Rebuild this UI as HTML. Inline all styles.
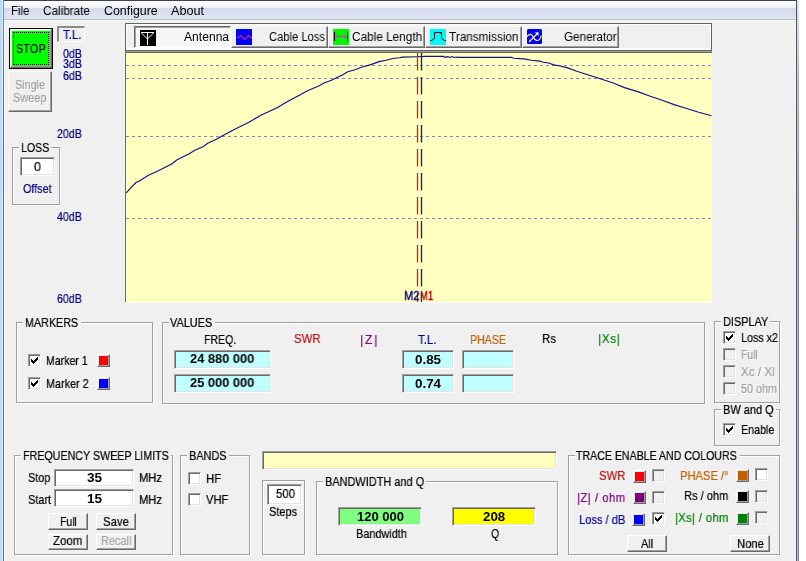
<!DOCTYPE html>
<html><head><meta charset="utf-8"><title>Antenna Analyser</title>
<style>
html,body{margin:0;padding:0}
body{width:806px;height:561px;overflow:hidden;background:#f0f0f0;position:relative;font-family:"Liberation Sans",sans-serif}
div,svg,span{position:absolute;box-sizing:border-box}
span{will-change:transform;white-space:nowrap;line-height:16px;transform-origin:0 0}
.sk{border:1px solid;border-color:#a0a0a0 #fff #fff #a0a0a0;box-shadow:inset 1px 1px 0 #696969,inset -1px -1px 0 #e3e3e3}
.rs{background:#f0f0f0;border:1px solid;border-color:#fff #696969 #696969 #fff;box-shadow:inset -1px -1px 0 #a0a0a0}
.sw{border:1px solid;border-color:#fff #696969 #696969 #fff;box-shadow:inset -1px -1px 0 #a0a0a0,inset 1px 1px 0 #e3e3e3}
.gb{border:1px solid #a0a0a0;box-shadow:1px 1px 0 #fff,inset 1px 1px 0 #fff}
</style></head>
<body>
<div style="left:0px;top:0px;width:806px;height:1px;background:#3e424a;"></div>
<div style="left:0px;top:0px;width:2px;height:561px;background:#badafb;"></div>
<div style="left:2px;top:0px;width:1px;height:561px;background:#dcefff;"></div>
<div style="left:3px;top:0px;width:1px;height:561px;background:linear-gradient(180deg,#808c9a 0,#667486 60px,#5e6c7c 200px);"></div>
<div style="left:4px;top:20px;width:1px;height:541px;background:#f5f8fa;"></div>
<div style="left:795px;top:20px;width:1px;height:541px;background:#f8fbfc;"></div>
<div style="left:796px;top:0px;width:1px;height:561px;background:#4a4f58;"></div>
<div style="left:797px;top:0px;width:1px;height:561px;background:linear-gradient(180deg,#dbe6f5 0,#c4cedc 80px,#b6becb 240px);"></div>
<div style="left:798px;top:0px;width:1px;height:561px;background:linear-gradient(180deg,#e6eef8 0,#a9b2be 80px,#7a828c 240px);"></div>
<div style="left:799px;top:0px;width:7px;height:561px;background:#fff;"></div>
<div style="left:4px;top:1px;width:792px;height:18px;background:linear-gradient(180deg,#ffffff 0%,#f7f8fb 20%,#eef0f6 37%,#d5daec 40%,#dadfef 70%,#e1e5f4 100%);"></div>
<div style="left:4px;top:19px;width:792px;height:1px;background:#b9bdc9;"></div>
<div style="left:5px;top:20px;width:790px;height:1px;background:#f7f7f7;"></div>
<span style="left:10.90px;top:2.54px;font-size:12px;color:#000;transform:scaleX(0.9512);">File</span>
<span style="left:43.10px;top:2.54px;font-size:12px;color:#000;transform:scaleX(0.9785);">Calibrate</span>
<span style="left:103.90px;top:2.54px;font-size:12px;color:#000;transform:scaleX(1.0321);">Configure</span>
<span style="left:170.80px;top:2.54px;font-size:12px;color:#000;transform:scaleX(1.0555);">About</span>
<div style="left:9px;top:28px;width:44px;height:41px;background:#000;"></div>
<div style="left:10px;top:29px;width:42px;height:39px;background:#00ff00;border:1px solid;border-color:#fff #696969 #696969 #fff;box-shadow:inset -1px -1px 0 #a0a0a0,inset 1px 1px 0 #e3e3e3;"></div>
<div style="left:13px;top:32px;width:36px;height:33px;border:1px dotted #000;"></div>
<span style="left:16.40px;top:40.70px;font-size:13px;color:#000;-webkit-text-stroke:0.22px;transform:scaleX(0.8013);letter-spacing:0.6px;">STOP</span>
<div class="rs" style="left:8px;top:71px;width:44px;height:41px;"></div>
<span style="left:15.10px;top:76.80px;font-size:13px;color:#a0a0a0;-webkit-text-stroke:0.22px;text-shadow:1px 1px 0 #fff;transform:scaleX(0.8329);">Single</span>
<span style="left:13.40px;top:89.80px;font-size:13px;color:#a0a0a0;-webkit-text-stroke:0.22px;text-shadow:1px 1px 0 #fff;transform:scaleX(0.8428);">Sweep</span>
<div style="left:57px;top:26px;width:28px;height:16px;border-style:solid;border-width:2px 1px 1px 2px;border-color:#8c8c8c #fff #fff #8c8c8c;"></div>
<span style="left:62.70px;top:26.50px;font-size:13px;color:#000080;-webkit-text-stroke:0.22px;transform:scaleX(0.8823);">T.L.</span>
<span style="left:63.10px;top:46.00px;font-size:13px;color:#000080;-webkit-text-stroke:0.22px;transform:scaleX(0.8167);">0dB</span>
<span style="left:63.10px;top:55.50px;font-size:13px;color:#000080;-webkit-text-stroke:0.22px;transform:scaleX(0.8167);">3dB</span>
<span style="left:63.10px;top:67.50px;font-size:13px;color:#000080;-webkit-text-stroke:0.22px;transform:scaleX(0.8167);">6dB</span>
<span style="left:57.20px;top:125.50px;font-size:13px;color:#000080;-webkit-text-stroke:0.22px;transform:scaleX(0.8165);">20dB</span>
<span style="left:57.20px;top:209.00px;font-size:13px;color:#000080;-webkit-text-stroke:0.22px;transform:scaleX(0.8165);">40dB</span>
<span style="left:57.20px;top:291.00px;font-size:13px;color:#000080;-webkit-text-stroke:0.22px;transform:scaleX(0.8165);">60dB</span>
<div class="gb" style="left:12px;top:147px;width:48px;height:58px;"></div>
<div style="left:18.9px;top:145px;width:32.6px;height:5px;background:#f0f0f0;"></div>
<span style="left:20.80px;top:139.50px;font-size:13px;color:#000;-webkit-text-stroke:0.22px;transform:scaleX(0.8159);">LOSS</span>
<div class="sk" style="left:20px;top:157px;width:35px;height:19px;background:#fff;"></div>
<span style="left:34.10px;top:158.50px;font-size:13px;color:#000;-webkit-text-stroke:0.22px;transform:scaleX(0.9538);">0</span>
<span style="left:22.90px;top:180.50px;font-size:13px;color:#000080;-webkit-text-stroke:0.22px;transform:scaleX(0.8330);">Offset</span>
<div style="left:125px;top:23px;width:587px;height:28px;background:#f0f0f0;border:1px solid #646464;box-shadow:inset 1px 1px 0 #fff,inset -1px -1px 0 #fff,inset 0 -2px 0 #fafafa;"></div>
<div style="left:134px;top:26px;width:97px;height:22px;border:1px solid;border-color:#696969 #fff #fff #696969;box-shadow:inset 1px 1px 0 #a0a0a0;background-color:#fff;background-image:linear-gradient(45deg,#f0f0f0 25%,transparent 25%,transparent 75%,#f0f0f0 75%),linear-gradient(45deg,#f0f0f0 25%,transparent 25%,transparent 75%,#f0f0f0 75%);background-size:2px 2px;background-position:0 0,1px 1px;"></div>
<svg style="left:140px;top:30px" width="16" height="16" viewBox="0 0 16 16"><rect width="16" height="16" fill="#000"/><path d="M1 2.5H14M7.5 2V15M1.5 3L7.5 9L13.5 3" stroke="#fff" stroke-width="1" fill="none"/></svg>
<span style="left:184.10px;top:29.44px;font-size:12px;color:#000;transform:scaleX(1.0085);">Antenna</span>
<div class="rs" style="left:231px;top:26px;width:97px;height:22px;"></div>
<span style="left:269.20px;top:28.54px;font-size:12px;color:#000;transform:scaleX(0.9326);">Cable Loss</span>
<div class="rs" style="left:328px;top:26px;width:97px;height:22px;"></div>
<span style="left:352.20px;top:28.54px;font-size:12px;color:#000;transform:scaleX(0.9819);">Cable Length</span>
<div class="rs" style="left:425px;top:26px;width:97px;height:22px;"></div>
<span style="left:449.20px;top:28.54px;font-size:12px;color:#000;transform:scaleX(0.9788);">Transmission</span>
<div class="rs" style="left:522px;top:26px;width:97px;height:22px;"></div>
<span style="left:564.00px;top:28.54px;font-size:12px;color:#000;transform:scaleX(0.9735);">Generator</span>
<svg style="left:236px;top:29px" width="16" height="16" viewBox="0 0 16 16"><rect width="16" height="16" fill="#0000f4"/><path d="M1 8.5L2.5 8.5L4.5 6.5L8.5 10.5L12.5 6.5L14.5 8.5L16 8.5" stroke="#c82490" stroke-width="1.1" fill="none"/></svg>
<svg style="left:333px;top:29px" width="16" height="16" viewBox="0 0 16 16"><rect width="16" height="16" fill="#00f400"/><path d="M1.5 3V12M14.5 3V12" stroke="#000" stroke-width="1"/><path d="M3 7.5H13" stroke="#b848c0" stroke-width="1"/><path d="M2.2 7.5L5 5.5V9.5ZM13.8 7.5L11 5.5V9.5Z" fill="#b848c0"/></svg>
<svg style="left:430px;top:29px" width="16" height="16" viewBox="0 0 16 16"><rect width="16" height="16" fill="#00f8f8"/><path d="M0 11.5L1.5 11.5L4.5 9.5V3.5H11.5V9.5L14.5 11.5L16 11.5" stroke="#202020" stroke-width="1" fill="none"/><rect x="5" y="4" width="1" height="1" fill="#ff4040"/><rect x="10" y="4" width="1" height="1" fill="#ff4040"/></svg>
<svg style="left:526px;top:29px" width="17" height="16" viewBox="0 0 17 16"><rect x="1" y="0" width="15" height="15" rx="1.5" fill="#0000e8"/><path d="M0 8.5C2 6 3.5 5 5 5.5C7.5 6.5 7.5 11.5 11 11.5C14 11.5 15 8.5 15 6.5" stroke="#fff8a0" stroke-width="1.2" fill="none"/><path d="M3 13L11.5 4.5" stroke="#fff" stroke-width="1.1"/><path d="M12.5 3.2L12.5 7L8.8 3.4Z" fill="#fff"/></svg>
<div style="left:125px;top:51px;width:587px;height:252px;background:#ffffc0;"></div>
<div style="left:125px;top:51px;width:587px;height:1px;background:#a0a098;"></div>
<div style="left:125px;top:52px;width:587px;height:1px;background:#6a6a58;"></div>
<div style="left:125px;top:51px;width:1px;height:252px;background:#6c6c64;"></div>
<div style="left:125px;top:302px;width:588px;height:1px;background:#fff;"></div>
<svg style="left:0;top:0" width="806" height="561" viewBox="0 0 806 561"><path d="M126 65.5H712" stroke="#8686a8" stroke-width="1" stroke-dasharray="3 3"/><path d="M126 78.5H712" stroke="#8686a8" stroke-width="1" stroke-dasharray="3 3"/><path d="M126 136.5H712" stroke="#8686a8" stroke-width="1" stroke-dasharray="3 3"/><path d="M126 218.5H712" stroke="#8686a8" stroke-width="1" stroke-dasharray="3 3"/><polyline fill="none" stroke="#10108c" stroke-width="1.15" points="126.4,192.8 130.7,187.8 135.7,182.8 139.3,181 148.5,175.3 157.8,170.9 172.1,163.8 177.1,159.8 189.2,153.8 194.9,150.3 203.5,146.4 207.7,143.3 216.3,139.3 223.4,135.3 234.3,129.5 248.5,122.5 261.4,114.9 277.1,107.8 288.5,100.9 299.9,95 308.4,90.3 317.7,86.6 324.6,82.8 331.4,80.3 335.5,78.3 342.3,75 347.8,71.8 355.9,69.5 361.4,67.3 371,64.6 379.1,61.6 386,60.2 392.8,58.5 399.6,57.7 402.3,57.1 417.4,56.7 425,56.4 443.4,56.4 445.2,57.3 447.8,56.6 449.9,57.5 452.1,56.6 453.9,57.5 456.5,57 457.3,57.3 511.2,57.3 513.8,58.2 524.2,58.9 531.2,60.2 539.9,61.1 543.3,62.2 548.5,63 553.8,64.9 560,66 566.9,67.6 576.8,71.3 598.7,78.2 612.6,82.8 624.5,87.6 638.4,91.9 650.3,96.3 662.2,100.3 674.1,104.6 686,108.2 697.9,112 711.5,115.7"/><path d="M417.5 53V302" stroke="#c82810" stroke-width="1.3" stroke-dasharray="17.5 6.5" stroke-dashoffset="0"/><path d="M421.5 53V302" stroke="#1818a8" stroke-width="1.3" stroke-dasharray="17.5 6.5"/></svg>
<span style="left:404.30px;top:287.80px;font-size:13px;color:#000080;-webkit-text-stroke:0.22px;transform:scaleX(0.8581);-webkit-text-stroke:0.35px;">M2</span>
<span style="left:419.60px;top:287.80px;font-size:13px;color:#b80000;-webkit-text-stroke:0.22px;transform:scaleX(0.7308);-webkit-text-stroke:0.35px;">M1</span>
<div class="gb" style="left:16px;top:322px;width:137px;height:81px;"></div>
<div style="left:23.0px;top:320px;width:57.5px;height:5px;background:#f0f0f0;"></div>
<span style="left:24.90px;top:314.80px;font-size:13px;color:#000;-webkit-text-stroke:0.22px;transform:scaleX(0.8274);">MARKERS</span>
<div class="sk" style="left:28px;top:354px;width:13px;height:13px;background:#fff;"><svg width="13" height="13" viewBox="0 0 13 13" style="position:absolute;left:-1px;top:-1px"><path shape-rendering="crispEdges" d="M3 5h1v1h1v1h1v-1h1v-1h1v-1h1v-1h1v3h-1v1h-1v1h-1v1h-1v1h-1v-1h-1v-1h-1z" fill="#000"/></svg></div>
<span style="left:45.90px;top:353.20px;font-size:13px;color:#000;-webkit-text-stroke:0.22px;transform:scaleX(0.8129);">Marker 1</span>
<div class="sk" style="left:28px;top:377px;width:13px;height:13px;background:#fff;"><svg width="13" height="13" viewBox="0 0 13 13" style="position:absolute;left:-1px;top:-1px"><path shape-rendering="crispEdges" d="M3 5h1v1h1v1h1v-1h1v-1h1v-1h1v-1h1v3h-1v1h-1v1h-1v1h-1v1h-1v-1h-1v-1h-1z" fill="#000"/></svg></div>
<span style="left:45.90px;top:376.20px;font-size:13px;color:#000;-webkit-text-stroke:0.22px;transform:scaleX(0.8324);">Marker 2</span>
<div class="sw" style="left:97px;top:354px;width:13px;height:13px;background:#ff0000;"></div>
<div class="sw" style="left:97px;top:377px;width:13px;height:13px;background:#0000ff;"></div>
<div class="gb" style="left:162px;top:322px;width:543px;height:82px;"></div>
<div style="left:168.5px;top:320px;width:46.5px;height:5px;background:#f0f0f0;"></div>
<span style="left:170.40px;top:314.70px;font-size:13px;color:#000;-webkit-text-stroke:0.22px;transform:scaleX(0.8382);">VALUES</span>
<span style="left:204.00px;top:331.50px;font-size:13px;color:#000;-webkit-text-stroke:0.22px;transform:scaleX(0.8104);">FREQ.</span>
<span style="left:294.10px;top:331.20px;font-size:13px;color:#b81414;-webkit-text-stroke:0.22px;transform:scaleX(0.8733);">SWR</span>
<span style="left:359.50px;top:331.50px;font-size:13px;color:#800080;-webkit-text-stroke:0.22px;transform:scaleX(0.9109);letter-spacing:2.2px;">|Z|</span>
<span style="left:417.60px;top:331.50px;font-size:13px;color:#000098;-webkit-text-stroke:0.22px;transform:scaleX(0.8823);">T.L.</span>
<span style="left:469.70px;top:331.50px;font-size:13px;color:#c06400;-webkit-text-stroke:0.22px;transform:scaleX(0.8145);">PHASE</span>
<span style="left:541.90px;top:330.80px;font-size:13px;color:#000;-webkit-text-stroke:0.22px;transform:scaleX(0.8747);">Rs</span>
<span style="left:597.60px;top:330.80px;font-size:13px;color:#008000;-webkit-text-stroke:0.22px;transform:scaleX(0.8790);letter-spacing:1px;">|Xs|</span>
<div class="sk" style="left:174px;top:350px;width:97px;height:19px;background:#c0ffff;"></div>
<div class="sk" style="left:174px;top:374px;width:97px;height:19px;background:#c0ffff;"></div>
<span style="left:190.40px;top:351.00px;font-size:13px;color:#000;font-weight:bold;transform:scaleX(0.9896);">24 880 000</span>
<span style="left:190.40px;top:375.00px;font-size:13px;color:#000;font-weight:bold;transform:scaleX(0.9896);">25 000 000</span>
<div class="sk" style="left:402px;top:350px;width:52px;height:19px;background:#c0ffff;"></div>
<div class="sk" style="left:402px;top:374px;width:52px;height:19px;background:#c0ffff;"></div>
<span style="left:415.10px;top:351.50px;font-size:13px;color:#000;font-weight:bold;transform:scaleX(1.0272);">0.85</span>
<span style="left:415.10px;top:375.50px;font-size:13px;color:#000;font-weight:bold;transform:scaleX(1.0272);">0.74</span>
<div class="sk" style="left:462px;top:350px;width:52px;height:19px;background:#c0ffff;"></div>
<div class="sk" style="left:462px;top:374px;width:52px;height:19px;background:#c0ffff;"></div>
<div class="gb" style="left:714px;top:321px;width:66px;height:82px;"></div>
<div style="left:720.9px;top:319px;width:49.60000000000002px;height:5px;background:#f0f0f0;"></div>
<span style="left:722.80px;top:314.00px;font-size:13px;color:#000;-webkit-text-stroke:0.22px;transform:scaleX(0.8396);">DISPLAY</span>
<div class="sk" style="left:723px;top:331px;width:13px;height:13px;background:#fff;"><svg width="13" height="13" viewBox="0 0 13 13" style="position:absolute;left:-1px;top:-1px"><path shape-rendering="crispEdges" d="M3 5h1v1h1v1h1v-1h1v-1h1v-1h1v-1h1v3h-1v1h-1v1h-1v1h-1v1h-1v-1h-1v-1h-1z" fill="#000"/></svg></div>
<span style="left:741.00px;top:329.80px;font-size:13px;color:#000;-webkit-text-stroke:0.22px;transform:scaleX(0.8257);">Loss x2</span>
<div class="sk" style="left:723px;top:348px;width:13px;height:13px;background:#f0f0f0;"></div>
<span style="left:741.00px;top:346.80px;font-size:13px;color:#a0a0a0;-webkit-text-stroke:0.22px;text-shadow:1px 1px 0 #fff;transform:scaleX(0.7922);">Full</span>
<div class="sk" style="left:723px;top:365px;width:13px;height:13px;background:#f0f0f0;"></div>
<span style="left:741.00px;top:363.80px;font-size:13px;color:#a0a0a0;-webkit-text-stroke:0.22px;text-shadow:1px 1px 0 #fff;transform:scaleX(0.8995);">Xc / Xl</span>
<div class="sk" style="left:723px;top:382px;width:13px;height:13px;background:#f0f0f0;"></div>
<span style="left:741.00px;top:380.80px;font-size:13px;color:#a0a0a0;-webkit-text-stroke:0.22px;text-shadow:1px 1px 0 #fff;transform:scaleX(0.8300);">50 ohm</span>
<div class="gb" style="left:714px;top:409px;width:66px;height:37px;"></div>
<div style="left:720.9px;top:407px;width:55.10000000000002px;height:5px;background:#f0f0f0;"></div>
<span style="left:722.80px;top:402.30px;font-size:13px;color:#000;-webkit-text-stroke:0.22px;transform:scaleX(0.8471);">BW and Q</span>
<div class="sk" style="left:723px;top:423px;width:13px;height:13px;background:#fff;"><svg width="13" height="13" viewBox="0 0 13 13" style="position:absolute;left:-1px;top:-1px"><path shape-rendering="crispEdges" d="M3 5h1v1h1v1h1v-1h1v-1h1v-1h1v-1h1v3h-1v1h-1v1h-1v1h-1v1h-1v-1h-1v-1h-1z" fill="#000"/></svg></div>
<span style="left:741.00px;top:422.00px;font-size:13px;color:#000;-webkit-text-stroke:0.22px;transform:scaleX(0.8225);">Enable</span>
<div class="gb" style="left:14px;top:455px;width:159px;height:100px;"></div>
<div style="left:21.1px;top:453px;width:150.1px;height:5px;background:#f0f0f0;"></div>
<span style="left:23.00px;top:448.00px;font-size:13px;color:#000;-webkit-text-stroke:0.22px;transform:scaleX(0.8226);">FREQUENCY SWEEP LIMITS</span>
<span style="left:27.90px;top:469.50px;font-size:13px;color:#000;-webkit-text-stroke:0.22px;transform:scaleX(0.8336);">Stop</span>
<span style="left:27.90px;top:491.50px;font-size:13px;color:#000;-webkit-text-stroke:0.22px;transform:scaleX(0.8410);">Start</span>
<div class="sk" style="left:54px;top:469px;width:80px;height:18px;background:#fff;"></div>
<div class="sk" style="left:54px;top:489px;width:80px;height:18px;background:#fff;"></div>
<span style="left:87.00px;top:470.09px;font-size:13.6px;color:#000;font-weight:bold;transform:scaleX(0.9917);">35</span>
<span style="left:87.00px;top:490.89px;font-size:13.6px;color:#000;font-weight:bold;transform:scaleX(0.9917);">15</span>
<span style="left:138.90px;top:469.50px;font-size:13px;color:#000;-webkit-text-stroke:0.22px;transform:scaleX(0.8608);">MHz</span>
<span style="left:138.90px;top:491.50px;font-size:13px;color:#000;-webkit-text-stroke:0.22px;transform:scaleX(0.8608);">MHz</span>
<div class="rs" style="left:48px;top:513px;width:40px;height:17px;"></div>
<span style="left:60.20px;top:513.50px;font-size:13px;color:#000;-webkit-text-stroke:0.22px;transform:scaleX(0.8018);">Full</span>
<div class="rs" style="left:96px;top:513px;width:40px;height:17px;"></div>
<span style="left:103.10px;top:513.50px;font-size:13px;color:#000;-webkit-text-stroke:0.22px;transform:scaleX(0.8704);">Save</span>
<div class="rs" style="left:48px;top:534px;width:40px;height:16px;"></div>
<span style="left:53.00px;top:533.30px;font-size:13px;color:#000;-webkit-text-stroke:0.22px;transform:scaleX(0.8786);">Zoom</span>
<div class="rs" style="left:96px;top:534px;width:40px;height:16px;"></div>
<span style="left:101.10px;top:533.30px;font-size:13px;color:#a0a0a0;-webkit-text-stroke:0.22px;text-shadow:1px 1px 0 #fff;transform:scaleX(0.8443);">Recall</span>
<div class="gb" style="left:180px;top:455px;width:70px;height:100px;"></div>
<div style="left:186.9px;top:453px;width:41.900000000000006px;height:5px;background:#f0f0f0;"></div>
<span style="left:188.80px;top:448.00px;font-size:13px;color:#000;-webkit-text-stroke:0.22px;transform:scaleX(0.8393);">BANDS</span>
<div class="sk" style="left:188px;top:472px;width:13px;height:13px;background:#fff;"></div>
<span style="left:205.90px;top:470.50px;font-size:13px;color:#000;-webkit-text-stroke:0.22px;transform:scaleX(0.8706);">HF</span>
<div class="sk" style="left:188px;top:493px;width:13px;height:13px;background:#fff;"></div>
<span style="left:205.90px;top:491.50px;font-size:13px;color:#000;-webkit-text-stroke:0.22px;transform:scaleX(0.8577);">VHF</span>
<div class="sk" style="left:262px;top:451px;width:295px;height:19px;background:#ffffc0;"></div>
<div class="gb" style="left:262px;top:480px;width:43px;height:75px;"></div>
<div class="sk" style="left:267px;top:484px;width:35px;height:21px;background:#fff;"></div>
<span style="left:275.60px;top:485.80px;font-size:13px;color:#000;-webkit-text-stroke:0.22px;transform:scaleX(0.8754);">500</span>
<span style="left:269.20px;top:504.00px;font-size:13px;color:#000;-webkit-text-stroke:0.22px;transform:scaleX(0.8421);">Steps</span>
<div class="gb" style="left:316px;top:481px;width:242px;height:74px;"></div>
<div style="left:322.9px;top:479px;width:103.40000000000003px;height:5px;background:#f0f0f0;"></div>
<span style="left:324.80px;top:474.00px;font-size:13px;color:#000;-webkit-text-stroke:0.22px;transform:scaleX(0.8416);">BANDWIDTH and Q</span>
<div class="sk" style="left:338px;top:507px;width:84px;height:19px;background:#80ff80;"></div>
<span style="left:356.70px;top:508.70px;font-size:13px;color:#000;font-weight:bold;transform:scaleX(1.0021);">120 000</span>
<div class="sk" style="left:452px;top:507px;width:84px;height:19px;background:#ffff00;"></div>
<span style="left:483.40px;top:508.70px;font-size:13px;color:#000;font-weight:bold;transform:scaleX(1.0229);">208</span>
<span style="left:355.70px;top:525.90px;font-size:13px;color:#000;-webkit-text-stroke:0.22px;transform:scaleX(0.8383);">Bandwidth</span>
<span style="left:491.10px;top:525.90px;font-size:13px;color:#000;-webkit-text-stroke:0.22px;transform:scaleX(0.8099);">Q</span>
<div class="gb" style="left:568px;top:455px;width:212px;height:100px;"></div>
<div style="left:574.5px;top:453px;width:165.0px;height:5px;background:#f0f0f0;"></div>
<span style="left:576.40px;top:447.80px;font-size:13px;color:#000;-webkit-text-stroke:0.22px;transform:scaleX(0.8148);">TRACE ENABLE AND COLOURS</span>
<span style="left:598.90px;top:468.40px;font-size:13px;color:#b81414;-webkit-text-stroke:0.22px;transform:scaleX(0.8667);">SWR</span>
<span style="left:577.40px;top:489.90px;font-size:13px;color:#800080;-webkit-text-stroke:0.22px;transform:scaleX(0.8642);letter-spacing:0.6px;">|Z| / ohm</span>
<span style="left:578.80px;top:511.70px;font-size:13px;color:#000098;-webkit-text-stroke:0.22px;transform:scaleX(0.8560);">Loss / dB</span>
<span style="left:680.10px;top:467.70px;font-size:13px;color:#c06400;-webkit-text-stroke:0.22px;transform:scaleX(0.8584);">PHASE /°</span>
<span style="left:684.40px;top:487.50px;font-size:13px;color:#000;-webkit-text-stroke:0.22px;transform:scaleX(0.8497);">Rs / ohm</span>
<span style="left:674.80px;top:509.80px;font-size:13px;color:#008000;-webkit-text-stroke:0.22px;transform:scaleX(0.8669);letter-spacing:0.4px;">|Xs| / ohm</span>
<div class="sw" style="left:633px;top:470px;width:13px;height:13px;background:#ff0000;"></div>
<div class="sw" style="left:633px;top:491px;width:13px;height:13px;background:#800080;"></div>
<div class="sw" style="left:632px;top:513px;width:13px;height:13px;background:#0000ff;"></div>
<div class="sw" style="left:736px;top:469px;width:13px;height:13px;background:#c06000;"></div>
<div class="sw" style="left:736px;top:490px;width:13px;height:13px;background:#000000;"></div>
<div class="sw" style="left:736px;top:512px;width:13px;height:13px;background:#008000;"></div>
<div class="sk" style="left:652px;top:469px;width:13px;height:13px;background:#f0f0f0;"></div>
<div class="sk" style="left:652px;top:491px;width:13px;height:13px;background:#f0f0f0;"></div>
<div class="sk" style="left:652px;top:512px;width:13px;height:13px;background:#fff;"><svg width="13" height="13" viewBox="0 0 13 13" style="position:absolute;left:-1px;top:-1px"><path shape-rendering="crispEdges" d="M3 5h1v1h1v1h1v-1h1v-1h1v-1h1v-1h1v3h-1v1h-1v1h-1v1h-1v1h-1v-1h-1v-1h-1z" fill="#000"/></svg></div>
<div class="sk" style="left:755px;top:468px;width:13px;height:13px;background:#fff;"></div>
<div class="sk" style="left:755px;top:490px;width:13px;height:13px;background:#f0f0f0;"></div>
<div class="sk" style="left:755px;top:511px;width:13px;height:13px;background:#f0f0f0;"></div>
<div class="rs" style="left:627px;top:535px;width:40px;height:17px;"></div>
<span style="left:640.90px;top:535.70px;font-size:13px;color:#000;-webkit-text-stroke:0.22px;transform:scaleX(0.8441);">All</span>
<div class="rs" style="left:730px;top:535px;width:40px;height:17px;"></div>
<span style="left:737.10px;top:535.70px;font-size:13px;color:#000;-webkit-text-stroke:0.22px;transform:scaleX(0.8656);">None</span>
</body></html>
